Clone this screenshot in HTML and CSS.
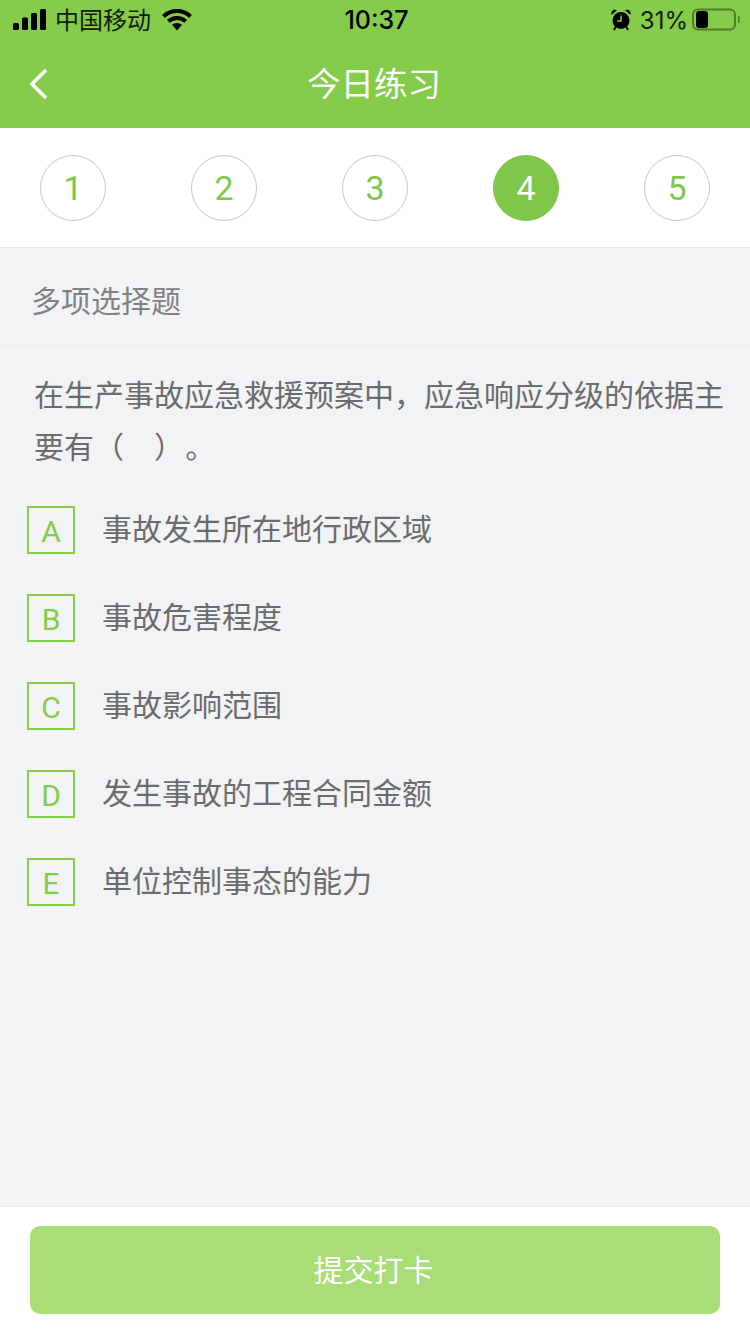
FILE: index.html
```html
<!DOCTYPE html>
<html lang="zh-CN">
<head>
    <meta charset="UTF-8">
    <title>今日练习</title>
    <meta name="viewport" content="width=device-width, initial-scale=1.0">
    <link rel="stylesheet" href="styles.css">
</head>
<body>
    <div class="page">
        <header class="top">
            <div class="status">
                <div class="status-left">
                    <svg class="signal" width="33" height="22" viewBox="0 0 33 22">
                        <rect x="0" y="14" width="6" height="7" rx="1.500"/>
                        <rect x="9" y="8.500" width="6" height="12.500" rx="1.500"/>
                        <rect x="18" y="4" width="6" height="17" rx="1.500"/>
                        <rect x="27" y="0" width="6" height="21" rx="1.500"/>
                    </svg>
                    <span class="carrier">中国移动</span>
                    <svg class="wifi" width="30" height="22" viewBox="0 0 30 22">
                        <path d="M1.500 7.500a19.500 19.500 0 0 1 27 0" fill="none" stroke="#000" stroke-width="4"/>
                        <path d="M6.300 12.300a12.800 12.800 0 0 1 17.400 0" fill="none" stroke="#000" stroke-width="4"/>
                        <path d="M10 15.800a7.800 7.800 0 0 1 10 0L15 21.500z"/>
                    </svg>
                </div>
                <div class="clock">10:37</div>
                <div class="status-right">
                    <svg class="alarm" width="20" height="22" viewBox="0 0 20 22">
                        <circle cx="10" cy="11.500" r="8.500"/>
                        <path d="M10 6.500v5.500H6" fill="none" stroke="#85cc4a" stroke-width="1.500"/>
                        <path d="M0.500 6 6 1.200 3 0.600 0.500 2.800zM19.500 6 14 1.200 17 0.600 19.500 2.800z"/>
                        <path d="M4.500 18 3 21M15.500 18 17 21" stroke="#000" stroke-width="1.800"/>
                    </svg>
                    <span class="percent">31%</span>
                    <svg class="battery" width="48" height="24" viewBox="0 0 48 24">
                        <rect x="1" y="1.500" width="42" height="20" rx="5" fill="none" stroke="#4d7f26" stroke-width="2"/>
                        <rect x="4" y="3" width="12" height="17" rx="3"/>
                        <rect x="46" y="8" width="1.500" height="7" fill="#4d7f26"/>
                    </svg>
                </div>
            </div>
            <div class="nav">
                <svg class="back" width="20" height="32" viewBox="0 0 20 32">
                    <path d="M17 2 3 16l14 14" fill="none" stroke="#fff" stroke-width="3.500"/>
                </svg>
                <h1 class="nav-title">今日练习</h1>
            </div>
        </header>

        <div class="steps">
            <div class="step">1</div>
            <div class="step">2</div>
            <div class="step">3</div>
            <div class="step step-on">4</div>
            <div class="step">5</div>
        </div>

        <main class="body">
            <div class="kind">多项选择题</div>
            <p class="question">在生产事故应急救援预案中，应急响应分级的依据主要有（　）&nbsp;。</p>
            <ul class="options">
                <li class="option"><span class="letter">A</span><span class="option-text">事故发生所在地行政区域</span></li>
                <li class="option"><span class="letter">B</span><span class="option-text">事故危害程度</span></li>
                <li class="option"><span class="letter">C</span><span class="option-text">事故影响范围</span></li>
                <li class="option"><span class="letter">D</span><span class="option-text">发生事故的工程合同金额</span></li>
                <li class="option"><span class="letter">E</span><span class="option-text">单位控制事态的能力</span></li>
            </ul>
        </main>

        <footer class="foot">
            <button class="submit" type="button">提交打卡</button>
        </footer>
    </div>
</body>
</html>
```

FILE: styles.css
```css
* {
    box-sizing: border-box;
}
html, body {
    height: 100%;
}
body {
    margin: 0;
    font-family: "Liberation Sans", "Noto Sans CJK SC", sans-serif;
    background-color: #f2f3f5;
}
.page {
    display: flex;
    flex-direction: column;
    height: 1334px;
    overflow: hidden;
}
.top {
    height: 128px;
    background-color: #85cc4a;
    flex: none;
}
.status {
    height: 40px;
    padding: 0 10px 0 13px;
    display: flex;
    align-items: center;
    color: #000;
}
.status-left {
    display: flex;
    align-items: center;
    flex: 1;
}
.carrier {
    margin-left: 9px;
    padding-bottom: 4px;
    font-size: 24px;
    color: #12200a;
}
.wifi {
    margin-left: 11px;
}
.clock {
    font-family: Inter, "Liberation Sans", sans-serif;
    font-size: 25px;
    font-weight: 500;
    color: #000;
}
.status-right {
    display: flex;
    align-items: center;
    justify-content: flex-end;
    flex: 1;
}
.percent {
    font-family: Inter, "Liberation Sans", sans-serif;
    font-size: 24px;
    margin-left: 9px;
    margin-right: 4px;
    color: #12200a;
}
.nav {
    height: 88px;
    padding: 0 2px 5px 0;
    position: relative;
    display: flex;
    align-items: center;
    justify-content: center;
}
.back {
    position: absolute;
    left: 29px;
    top: 28px;
}
.nav-title {
    margin: 0;
    font-size: 33.500px;
    font-weight: 400;
    color: #fff;
}
.steps {
    flex: none;
    height: 120px;
    background-color: #fff;
    border-bottom: 1px solid #e8e9eb;
    padding: 0 40px;
    display: flex;
    align-items: center;
    justify-content: space-between;
}
.step {
    width: 66px;
    height: 66px;
    border-radius: 50%;
    border: 1px solid #c8c8c8;
    color: #7ec74a;
    font-family: Roboto, "Liberation Sans", sans-serif;
    font-size: 34px;
    display: flex;
    align-items: center;
    justify-content: center;
}
.step-on {
    background-color: #7ec74a;
    border-color: #7ec74a;
    color: #fff;
}
.body {
    flex: 1;
}
.kind {
    height: 98px;
    padding: 5px 0 0 31px;
    display: flex;
    align-items: center;
    font-size: 30px;
    color: #808285;
    border-bottom: 1px solid #e9eaec;
}
.question {
    margin: 0;
    padding: 24px 20px 0 34px;
    font-size: 30px;
    line-height: 52px;
    word-spacing: -7px;
    color: #6c6c6c;
}
.options {
    list-style: none;
    margin: 0;
    padding: 23px 0 0 27px;
}
.option {
    height: 88px;
    display: flex;
    align-items: flex-start;
    padding-top: 9px;
}
.letter {
    width: 48px;
    height: 48px;
    padding-top: 2px;
    border: 2px solid #85cc4a;
    color: #85cc4a;
    font-family: Roboto, "Liberation Sans", sans-serif;
    font-size: 30px;
    display: flex;
    align-items: center;
    justify-content: center;
    flex: none;
}
.option-text {
    margin-left: 27px;
    padding-top: 1px;
    font-size: 30px;
    line-height: 46px;
    color: #6c6c6c;
}
.foot {
    flex: none;
    height: 128px;
    background-color: #fff;
    border-top: 1px solid #e8e9eb;
    padding: 19px 30px 0;
}
.submit {
    display: block;
    width: 100%;
    height: 88px;
    border: none;
    border-radius: 10px;
    background-color: #a9dd76;
    color: #fff;
    font-family: inherit;
    font-size: 30px;
    padding: 0 3px 4px 0;
}
```
